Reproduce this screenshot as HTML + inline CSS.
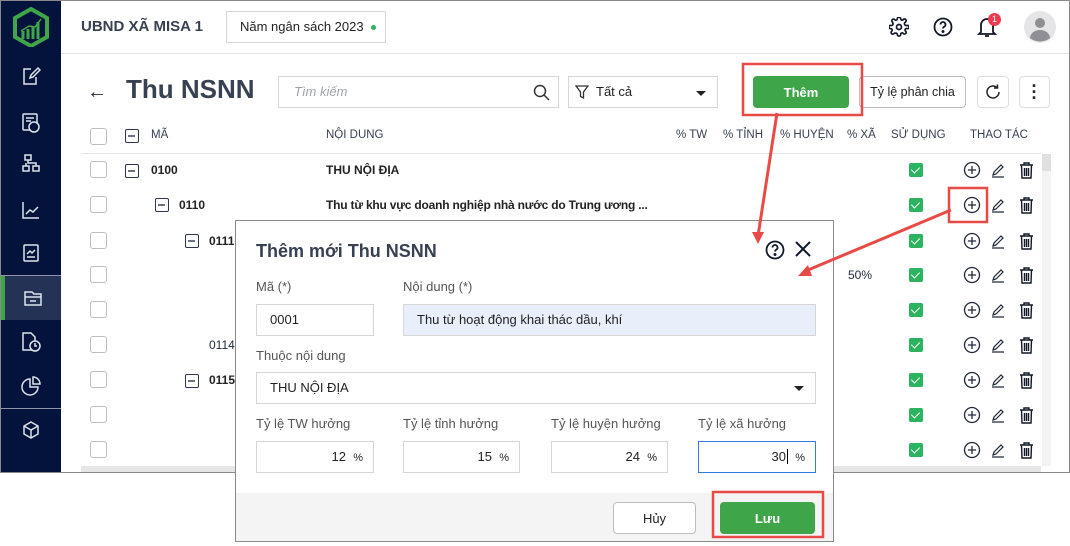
<!DOCTYPE html>
<html><head><meta charset="utf-8">
<style>
*{box-sizing:border-box;margin:0;padding:0}
body{width:1070px;height:546px;background:#fff;font-family:"Liberation Sans",sans-serif;position:relative;overflow:hidden;color:#1f2937}
.app{position:absolute;left:0;top:0;width:1070px;height:473px;border:1px solid #8a8a8a;overflow:hidden;background:#fff}
.side{position:absolute;left:0;top:0;width:60px;height:473px;background:#03133b}
.side .it{position:absolute;left:0;width:60px;height:44px;display:flex;align-items:center;justify-content:center}
.side .sep{position:absolute;left:0;width:60px;height:1px;background:#8d96ab}
.ab{position:absolute;font-size:12px;color:#1f2937}
.b{font-weight:bold;color:#222}
.hdr{position:absolute;left:60px;top:0;right:0;height:53px;border-bottom:1px solid #e2e2e2}
.cb{position:absolute;width:17px;height:17px;border:1px solid #bdbdbd;border-radius:3px;background:#fff}
.mn{position:absolute;width:14px;height:14px;border:1.5px solid #2b3550;border-radius:2px}
.mn:after{content:"";position:absolute;left:2px;top:5px;width:7px;height:1.5px;background:#6b7280}
.ck{position:absolute;width:14px;height:14px;background:#2bb35f;border-radius:2px}
.ck:after{content:"";position:absolute;left:4px;top:2px;width:4px;height:7px;border:solid #fff;border-width:0 1.5px 1.5px 0;transform:rotate(45deg)}
.th{position:absolute;font-size:11.5px;color:#374151;top:128px}
.dlg{position:absolute;left:235px;top:220px;width:599px;height:322px;background:#fff;border:1px solid #8a8a8a}
.lbl{position:absolute;font-size:13px;color:#555}
.inp{position:absolute;height:32px;border:1px solid #d6d6d6;background:#fff;font-size:13px;color:#222;line-height:30px}
.btn{position:absolute;border-radius:4px;font-size:13px;display:flex;align-items:center;justify-content:center}
</style></head><body>
<div class="app">
 <div class="side">
  <svg style="position:absolute;left:10px;top:6px" width="40" height="40" viewBox="0 0 40 40"><path d="M20 2 L36 11 V30 L20 39 L4 30 V11 Z" fill="none" stroke="#3ea548" stroke-width="4"/><path d="M12 32 V24 M17 32 V22 M22 32 V20 M27 32 V15" stroke="#3ea548" stroke-width="3"/><path d="M10 24 L18 19 L24 20 L30 12" stroke="#3ea548" stroke-width="1.5" fill="none"/></svg>
  <div class="it" style="top:53px"><svg width="20" height="20" viewBox="0 0 20 20" fill="none" stroke="#dfe3ea" stroke-width="1.5"><path d="M10 3H3v15h12v-7"/><path d="M9 12l1-3 7-7 2 2-7 7z"/></svg></div>
  <div class="it" style="top:100px"><svg width="20" height="22" viewBox="0 0 20 22" fill="none" stroke="#dfe3ea" stroke-width="1.5"><rect x="2" y="2" width="14" height="16" rx="1"/><path d="M5 6h8M5 9h5"/><circle cx="13" cy="15" r="5" fill="#03133b"/></svg></div>
  <div class="it" style="top:140px"><svg width="20" height="20" viewBox="0 0 20 20" fill="none" stroke="#dfe3ea" stroke-width="1.5"><rect x="4" y="2" width="6" height="5"/><rect x="2" y="13" width="6" height="5"/><rect x="12" y="13" width="6" height="5"/><path d="M7 7v3h8v3M5 10v3"/></svg></div>
  <div class="it" style="top:187px"><svg width="20" height="20" viewBox="0 0 20 20" fill="none" stroke="#dfe3ea" stroke-width="1.5"><path d="M2 2v16h16"/><path d="M5 14l4-4 3 2 5-5"/></svg></div>
  <div class="it" style="top:230px"><svg width="20" height="20" viewBox="0 0 20 20" fill="none" stroke="#dfe3ea" stroke-width="1.5"><rect x="3" y="2" width="14" height="16" rx="1"/><path d="M6 11l3-3 2 2 3-3M6 14h8"/></svg></div>
  <div class="sep" style="top:274px"></div>
  <div class="it" style="top:275px;height:44px;background:#243255;border-left:4px solid #3ea548"><svg width="22" height="20" viewBox="0 0 22 20" fill="none" stroke="#dfe3ea" stroke-width="1.5"><path d="M3 4h7l2 2h7v11H3z"/><path d="M3 9h16M8 13h6"/></svg></div>
  <div class="it" style="top:319px"><svg width="22" height="22" viewBox="0 0 22 22" fill="none" stroke="#dfe3ea" stroke-width="1.5"><path d="M12 19H3V2h8l4 4v4"/><circle cx="15" cy="15" r="5"/><path d="M15 12v3h2"/></svg></div>
  <div class="it" style="top:363px"><svg width="22" height="22" viewBox="0 0 22 22" fill="none" stroke="#dfe3ea" stroke-width="1.5"><path d="M10 4a8 8 0 1 0 8 8h-8z"/><path d="M13 2a7 7 0 0 1 7 7h-7z"/></svg></div>
  <div class="sep" style="top:407px"></div>
  <div class="it" style="top:407px"><svg width="20" height="20" viewBox="0 0 20 20" fill="none" stroke="#dfe3ea" stroke-width="1.5"><path d="M10 2l7 4v8l-7 4-7-4V6z"/><path d="M3 6l7 4 7-4M10 10v8"/></svg></div>
 </div>
 <div class="hdr">
  <div style="position:absolute;left:20px;top:17px;font-size:15px;color:#374151;font-weight:bold">UBND XÃ MISA 1</div>
  <div style="position:absolute;left:165px;top:10px;width:160px;height:32px;border:1px solid #d6d6d6;font-size:13px;color:#222;line-height:30px;padding-left:13px">Năm ngân sách 2023 <span style="display:inline-block;width:5px;height:5px;border-radius:50%;background:#2bb35f;vertical-align:middle;margin-left:4px"></span></div>
  <svg style="position:absolute;left:828px;top:16px" width="20" height="20" viewBox="0 0 24 24" fill="none" stroke="#111827" stroke-width="2"><circle cx="12" cy="12" r="3"/><path d="M19.4 15a1.7 1.7 0 0 0 .3 1.8l.1.1a2 2 0 1 1-2.8 2.8l-.1-.1a1.7 1.7 0 0 0-2.9 1.2V21a2 2 0 1 1-4 0v-.1A1.7 1.7 0 0 0 8 19.4a1.7 1.7 0 0 0-1.8.3l-.1.1a2 2 0 1 1-2.8-2.8l.1-.1A1.7 1.7 0 0 0 2.2 14H2a2 2 0 1 1 0-4h.1A1.7 1.7 0 0 0 4.6 8a1.7 1.7 0 0 0-.3-1.8l-.1-.1a2 2 0 1 1 2.8-2.8l.1.1A1.7 1.7 0 0 0 10 2.2V2a2 2 0 1 1 4 0v.1a1.7 1.7 0 0 0 2.9 1.2l.1-.1a2 2 0 1 1 2.8 2.8l-.1.1A1.7 1.7 0 0 0 21.8 10H22a2 2 0 1 1 0 4h-.1a1.7 1.7 0 0 0-2.5 1z"/></svg>
  <svg style="position:absolute;left:872px;top:16px" width="20" height="20" viewBox="0 0 20 20" fill="none" stroke="#111827" stroke-width="1.8"><circle cx="10" cy="10" r="8.5"/><path d="M7.5 7.5a2.5 2.5 0 1 1 3.5 2.3c-.7.4-1 .9-1 1.7"/><circle cx="10" cy="14.5" r=".6" fill="#111827"/></svg>
  <svg style="position:absolute;left:916px;top:15px" width="20" height="22" viewBox="0 0 20 22" fill="none" stroke="#111827" stroke-width="1.8"><path d="M4 16V9a6 6 0 0 1 12 0v7l2 2H2z"/><path d="M8 20h4"/></svg>
  <div style="position:absolute;left:927px;top:12px;width:13px;height:13px;border-radius:50%;background:#ef3b50;color:#fff;font-size:9px;text-align:center;line-height:13px">1</div>
  <svg style="position:absolute;left:963px;top:10px" width="32" height="32" viewBox="0 0 32 32"><circle cx="16" cy="16" r="16" fill="#e5e5e7"/><circle cx="16" cy="12" r="5" fill="#8e8e94"/><path d="M6 27a10 8 0 0 1 20 0a16 16 0 0 1-20 0z" fill="#8e8e94"/></svg>
 </div>
 <div class="ab" style="left:86px;top:80px;font-size:20px">←</div>
 <div class="ab" style="left:125px;top:73px;font-size:26px;font-weight:bold;color:#374151">Thu NSNN</div>
 <div style="position:absolute;left:277px;top:75px;width:281px;height:32px;border:1px solid #d6d6d6;font-size:13px;color:#9ca3af;font-style:italic;padding-left:15px;line-height:30px">Tìm kiếm
  <svg style="position:absolute;right:8px;top:7px" width="17" height="17" viewBox="0 0 17 17" fill="none" stroke="#333" stroke-width="1.5"><circle cx="7" cy="7" r="5.5"/><path d="M11 11l5 5"/></svg></div>
 <div style="position:absolute;left:567px;top:75px;width:150px;height:32px;border:1px solid #d6d6d6;font-size:13px;color:#222;line-height:30px;padding-left:27px">Tất cả
  <svg style="position:absolute;left:6px;top:8px" width="14" height="15" viewBox="0 0 14 15" fill="none" stroke="#333" stroke-width="1.3"><path d="M1 1h12L8.5 7v6l-3-1.5V7z"/></svg>
  <div style="position:absolute;right:11px;top:14px;border:5px solid transparent;border-top:5px solid #222;border-bottom:0"></div></div>
 <div class="btn" style="left:752px;top:75px;width:96px;height:32px;background:#3ea548;color:#fff;font-weight:bold">Thêm</div>
 <div class="btn" style="left:858px;top:75px;width:107px;height:32px;border:1px solid #bdbdbd;color:#222;font-size:12.5px">Tỷ lệ phân chia</div>
 <div class="btn" style="left:976px;top:75px;width:32px;height:32px;border:1px solid #ddd"><svg width="18" height="18" viewBox="0 0 18 18" fill="none" stroke="#222" stroke-width="1.5"><path d="M15 9a6 6 0 1 1-2-4.5"/><path d="M13.5 1.5v3.5H10"/></svg></div>
 <div class="btn" style="left:1018px;top:75px;width:31px;height:32px;border:1px solid #ddd;font-size:18px;font-weight:bold;line-height:6px;flex-direction:column">·<br>·<br>·</div>

 <div class="cb" style="left:89px;top:127px"></div><div class="mn" style="left:124px;top:128px"></div>
 <div class="th" style="left:150px">MÃ</div>
 <div class="th" style="left:325px">NỘI DUNG</div>
 <div class="th" style="left:675px">% TW</div>
 <div class="th" style="left:722px">% TỈNH</div>
 <div class="th" style="left:779px">% HUYỆN</div>
 <div class="th" style="left:846px">% XÃ</div>
 <div class="th" style="left:890px">SỬ DỤNG</div>
 <div class="th" style="left:969px">THAO TÁC</div>
 <div style="position:absolute;left:80px;top:152px;width:960px;height:1px;background:#e5e5e5"></div>
 <div style="position:absolute;left:1041px;top:153px;width:9px;height:312px;background:#f3f3f3"></div>
 <div style="position:absolute;left:1041px;top:153px;width:9px;height:17px;background:#e0e0e0"></div>
 <div style="position:absolute;left:80px;top:465px;width:960px;height:6px;background:#e6e6e6"></div>

 <div id="rows"></div>
 <div class="ab b" style="left:150px;top:162px">0100</div><div class="mn" style="left:124px;top:163px"></div>
 <div class="ab b" style="left:325px;top:162px">THU NỘI ĐỊA</div>
 <div class="ab b" style="left:178px;top:197px">0110</div><div class="mn" style="left:154px;top:197px"></div>
 <div class="ab b" style="left:325px;top:197px;letter-spacing:-0.2px">Thu từ khu vực doanh nghiệp nhà nước do Trung ương ...</div>
 <div class="ab b" style="left:208px;top:233px">0111</div><div class="mn" style="left:184px;top:233px"></div>
 <div class="ab" style="left:208px;top:337px">0114</div>
 <div class="ab b" style="left:208px;top:372px">0115</div><div class="mn" style="left:184px;top:373px"></div>
 <div class="ab" style="left:847px;top:267px">50%</div>
</div>

<div class="dlg">
 <div style="position:absolute;left:20px;top:20px;font-size:18px;font-weight:bold;color:#374151">Thêm mới Thu NSNN</div>
 <svg style="position:absolute;left:529px;top:19px" width="20" height="20" viewBox="0 0 20 20" fill="none" stroke="#111827" stroke-width="1.8"><circle cx="10" cy="10" r="8.5"/><path d="M7.5 7.5a2.5 2.5 0 1 1 3.5 2.3c-.7.4-1 .9-1 1.7"/><circle cx="10" cy="14.5" r=".6" fill="#111827"/></svg>
 <svg style="position:absolute;left:558px;top:19px" width="18" height="18" viewBox="0 0 18 18" stroke="#111827" stroke-width="2"><path d="M2 2l14 14M16 2L2 16"/></svg>
 <div class="lbl" style="left:20px;top:58px">Mã (*)</div>
 <div class="lbl" style="left:167px;top:58px">Nội dung (*)</div>
 <div class="inp" style="left:20px;top:83px;width:118px;padding-left:13px">0001</div>
 <div class="inp" style="left:167px;top:83px;width:413px;padding-left:13px;background:#e8effb">Thu từ hoạt động khai thác dầu, khí</div>
 <div class="lbl" style="left:20px;top:127px">Thuộc nội dung</div>
 <div class="inp" style="left:20px;top:151px;width:560px;padding-left:13px">THU NỘI ĐỊA<div style="position:absolute;right:11px;top:13px;border:5px solid transparent;border-top:5px solid #222;border-bottom:0"></div></div>
 <div class="lbl" style="left:20px;top:195px">Tỷ lệ TW hưởng</div>
 <div class="lbl" style="left:167px;top:195px">Tỷ lệ tỉnh hưởng</div>
 <div class="lbl" style="left:315px;top:195px">Tỷ lệ huyện hưởng</div>
 <div class="lbl" style="left:462px;top:195px">Tỷ lệ xã hưởng</div>
 <div class="inp" style="left:20px;top:220px;width:118px;text-align:right;padding-right:10px">12 &nbsp;<span style="font-size:11px">%</span></div>
 <div class="inp" style="left:167px;top:220px;width:117px;text-align:right;padding-right:10px">15 &nbsp;<span style="font-size:11px">%</span></div>
 <div class="inp" style="left:315px;top:220px;width:117px;text-align:right;padding-right:10px">24 &nbsp;<span style="font-size:11px">%</span></div>
 <div class="inp" style="left:462px;top:220px;width:118px;text-align:right;padding-right:10px;border-color:#2f7de1">30<span style="border-left:1px solid #000;margin-left:1px"></span> &nbsp;<span style="font-size:11px">%</span></div>
 <div style="position:absolute;left:0;top:272px;width:597px;height:48px;background:#f4f4f4"></div>
 <div class="btn" style="left:377px;top:281px;width:83px;height:32px;border:1px solid #bdbdbd;background:#fff;color:#222">Hủy</div>
 <div class="btn" style="left:484px;top:281px;width:95px;height:32px;background:#3ea548;color:#fff;font-weight:bold">Lưu</div>
</div>

<svg style="position:absolute;left:0;top:0" width="1070" height="546">
 <rect x="743" y="64" width="119" height="51" fill="none" stroke="#e84a46" stroke-width="2.5"/>
 <rect x="949" y="188" width="38" height="34" fill="none" stroke="#e84a46" stroke-width="2.5"/>
 <rect x="713" y="492" width="110" height="45" fill="none" stroke="#e84a46" stroke-width="2.5"/>
 <path d="M777 113L758 236" stroke="#e84a46" stroke-width="3"/><path d="M752 232l6 12 6-12z" fill="#e84a46"/>
 <path d="M951 210L808 270" stroke="#e84a46" stroke-width="3"/><path d="M798 276l14 0-4-11z" fill="#e84a46"/>
</svg>
<script>
var ys=[169,204,240,274,309,344,379,414,449],h='';
ys.forEach(function(y,i){
 h+='<div class="cb" style="left:89px;top:'+(y-9)+'px"></div>';
 h+='<div class="ck" style="left:908px;top:'+(y-7)+'px"></div>';
 h+='<svg style="position:absolute;left:962px;top:'+(y-9)+'px" width="18" height="18" viewBox="0 0 18 18" fill="none" stroke="#1f2937" stroke-width="1.3"><circle cx="9" cy="9" r="7.5"/><path d="M9 5v8M5 9h8"/></svg>';
 h+='<svg style="position:absolute;left:990px;top:'+(y-8)+'px" width="14" height="16" viewBox="0 0 14 16" fill="none" stroke="#1f2937" stroke-width="1.2"><path d="M2 13l1-3 7-7 2 2-7 7zM1 15h12"/></svg>';
 h+='<svg style="position:absolute;left:1018px;top:'+(y-9)+'px" width="15" height="18" viewBox="0 0 15 18" fill="none" stroke="#111827" stroke-width="1.4"><path d="M1 4h13M5 4V2h5v2M2.5 4l.5 13h9l.5-13M5.5 7v8M7.5 7v8M9.5 7v8"/></svg>';
});
var d=document.createElement('div');d.style.cssText='position:absolute;left:0;top:0';d.innerHTML=h;
document.querySelector('.app').insertBefore(d,document.getElementById('rows'));
</script>
</body></html>
